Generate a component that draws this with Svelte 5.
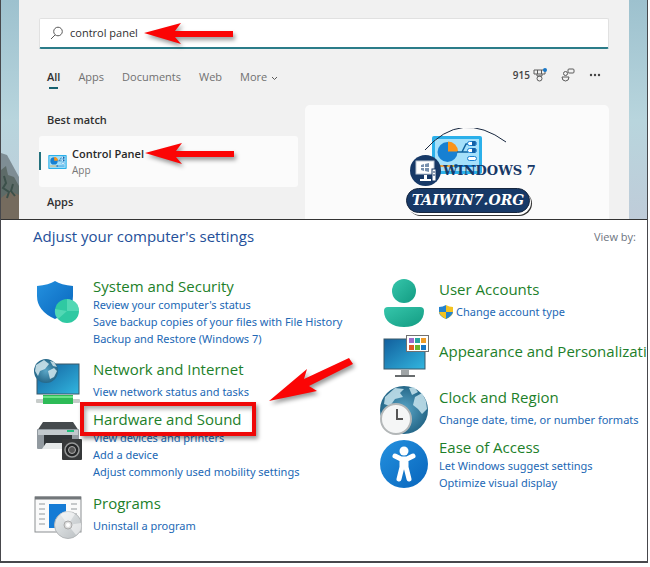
<script>
  const tabs = ['All', 'Apps', 'Documents', 'Web', 'More'];

  const columns = [
    [
      { id: 'system', title: 'System and Security', links: ["Review your computer's status", 'Save backup copies of your files with File History', 'Backup and Restore (Windows 7)'] },
      { id: 'network', title: 'Network and Internet', spaced: true, links: ['View network status and tasks'] },
      { id: 'hardware', title: 'Hardware and Sound', marked: true, links: ['View devices and printers', 'Add a device', 'Adjust commonly used mobility settings'] },
      { id: 'programs', title: 'Programs', spaced: true, links: ['Uninstall a program'] }
    ],
    [
      { id: 'users', title: 'User Accounts', spaced: true, shield: true, links: ['Change account type'] },
      { id: 'appearance', title: 'Appearance and Personalization', links: [] },
      { id: 'clock', title: 'Clock and Region', spaced: true, links: ['Change date, time, or number formats'] },
      { id: 'ease', title: 'Ease of Access', links: ['Let Windows suggest settings', 'Optimize visual display'] }
    ]
  ];

  let query = $state('control panel');
  let active = $state('All');
</script>

{#snippet panelArt()}
  <rect x="0" y="0" width="50" height="38" rx="2" fill="#2bb0ea" />
  <rect x="3" y="3" width="44" height="32" fill="#a5e0fa" />
  <circle cx="15.5" cy="16" r="10" fill="#1780d2" />
  <path d="M16 15.500V5.500a10 10 0 0 1 10 10z" fill="#fb9419" />
  <path d="M25 16h5l4-8h3M30 16h6" fill="none" stroke="#11639e" stroke-width="1.500" />
  <g fill="#fff" stroke="#1780d2"><rect x="35.500" y="5.500" width="9" height="4" rx="2" /><rect x="35.500" y="12.500" width="9" height="4" rx="2" /><rect x="35.500" y="20.500" width="9" height="4" rx="2" /></g>
  <path d="M40 5h3q2 2 0 5h-3zM40 12h3q2 2 0 5h-3z" fill="#1261a8" />
  <path d="M5 30h18" stroke="#e8a339" stroke-width="2" />
  <path d="M23 30h21" stroke="#1686d5" stroke-width="2" />
  <circle cx="24" cy="30" r="2" fill="#1261a8" />
{/snippet}

{#snippet arrow(cls)}
  <svg class="arrow {cls}" width="92" height="24" viewBox="0 0 92 24" aria-hidden="true">
    <path d="M1 11L38 1l-6 8h58v6H32l6 7z" fill="#fb0505" />
  </svg>
{/snippet}

{#snippet icon(id)}
  <svg class="icon" width="50" height="40" viewBox="0 0 50 40" aria-hidden="true">
    {#if id === 'system'}
      <path d="M2 10Q14 9 20 5q6 4 18 5v10q0 15-18 23Q2 35 2 20z" fill="url(#blue)" />
      <circle cx="32" cy="35" r="12" fill="#2fc9a2" />
      <path d="M32 35V23a12 12 0 0 1 12 12zM32 35l-9 8q-4-4-3-10z" fill="#65e0bf" opacity=".65" />
    {:else if id === 'network'}
      <rect x="2" y="5" width="42" height="30" fill="url(#screen)" stroke="#3b5869" />
      <circle cx="11" cy="12" r="12" fill="url(#globe)" />
      <path d="M1 6l8-5 5 4-4 5-5 2-2 5-3-5zM13 12l6-3 3 3-3 6-4 2zM15 2l4 1 3 5-4-1z" fill="#d4e7ed" opacity=".85" />
      <rect x="1" y="40" width="44" height="4" rx="1" fill="#c7ccca" />
      <path d="M8 36h30v9H8z" fill="#2dbb57" />
      <path d="M8 38h30" stroke="#6be287" stroke-width="2" />
    {:else if id === 'hardware'}
      <path d="M8 13h30l6 9H2z" fill="#454a4d" />
      <rect x="2" y="20" width="42" height="20" rx="1" fill="#929aa0" />
      <path d="M3 21h40v5H3z" fill="#c2c9cd" />
      <path d="M32 22h7" stroke="#20bf7d" stroke-width="2" />
      <path d="M9 26h28v14H9z" fill="#303538" />
      <path d="M11 34h24l4 6H7z" fill="#e5e8e9" />
      <rect x="27" y="30" width="20" height="21" rx="1" fill="#363839" />
      <circle cx="37" cy="41" r="7" fill="#242627" stroke="#969898" stroke-width="1.500" />
      <circle cx="37" cy="41" r="3.500" fill="#555" stroke="#aaa" />
    {:else if id === 'programs'}
      <rect x="0" y="4" width="46" height="35" fill="#fafafa" stroke="#8b8f92" />
      <path d="M0 5h46" stroke="#72777a" stroke-width="3" />
      <path d="M4 11h6M4 16h6M4 21h6M4 26h6M4 31h6M36 11h6M36 16h6M36 21h6" stroke="#92989b" />
      <rect x="14" y="11" width="17" height="24" fill="#157bd5" />
      <circle cx="33" cy="32" r="13.500" fill="url(#disc)" stroke="#b4b7b9" />
      <path d="M33 32L25 21q8-6 15 0zM33 32l8 10q7-5 5-12z" fill="#fff" opacity=".5" />
      <circle cx="33" cy="32" r="4" fill="#ddd" stroke="#aaa" /><circle cx="33" cy="32" r="2" fill="#fff" />
    {:else if id === 'users'}
      <circle cx="23" cy="12" r="12" fill="url(#teal)" />
      <path d="M7 28h32q4 0 4 4c0 10-8 16-20 16S3 42 3 32q0-4 4-4z" fill="url(#teal)" />
    {:else if id === 'appearance'}
      <rect x="3" y="-2" width="41" height="30" fill="url(#screen)" stroke="#3b5869" />
      <path d="M20 29h8v5h-8z" fill="#a0a5a7" /><path d="M14 35h20" stroke="#686c6e" stroke-width="2" />
      <rect x="25.500" y="-5.500" width="22" height="16" fill="#fff" stroke="#717171" />
      <path d="M28-3h5v5h-5z" fill="#9b6acc" /><path d="M34-3h5v5h-5z" fill="#27a5a0" /><path d="M40-3h5v5h-5z" fill="#ee9b27" />
      <path d="M28 4h5v5h-5z" fill="#dd5825" /><path d="M34 4h5v5h-5z" fill="#6ab52c" /><path d="M40 4h5v5h-5z" fill="#1976c4" />
    {:else if id === 'clock'}
      <circle cx="23" cy="23" r="24" fill="url(#globe)" />
      <path d="M4 10l10-9 9 1-4 4 3 4-8 2-5 7-6-2zM28 1l5-1 4 5-6 3zM34 10l7-4 4 8 1 8-5 5-4-5-5-4z" fill="#c9e5ee" opacity=".85" />
      <circle cx="15" cy="32" r="15" fill="#f5f6f6" stroke="#b3b7b8" stroke-width="2" />
      <path d="M16 22v10h6" fill="none" stroke="#555" stroke-width="2" />
    {:else}
      <circle cx="23" cy="27" r="24" fill="url(#blue)" />
      <circle cx="23" cy="14" r="4.500" fill="#fff" />
      <path d="M14 19l6 3h6l6-3M21 24h4v6h-4zM21 30l-3 12M25 30l3 12" fill="none" stroke="#fff" stroke-width="5" stroke-linecap="round" stroke-linejoin="round" />
    {/if}
  </svg>
{/snippet}

<svg class="defs" width="0" height="0" aria-hidden="true">
  <defs>
    <linearGradient id="blue" x2="1" y2="1"><stop stop-color="#2491df" /><stop offset="1" stop-color="#0865bc" /></linearGradient>
    <linearGradient id="screen" x2="1" y2="1"><stop stop-color="#125f9d" /><stop offset="1" stop-color="#32b6df" /></linearGradient>
    <linearGradient id="teal" x2="1" y2="1"><stop stop-color="#36c6ab" /><stop offset="1" stop-color="#129b82" /></linearGradient>
    <linearGradient id="disc" x2="1" y2="1"><stop stop-color="#edf0f1" /><stop offset="1" stop-color="#b8bdc0" /></linearGradient>
    <radialGradient id="globe"><stop stop-color="#5aa6c7" /><stop offset="1" stop-color="#266889" /></radialGradient>
  </defs>
</svg>

<main>
  <section class="desktop">
    <svg class="hills" width="18" height="70" viewBox="0 0 18 70" aria-hidden="true">
      <path d="M0 4l6 2 12 22v42H0z" fill="#7e8d94" />
      <path d="M0 21l5-4 2 9 6 2 5 9v33H0z" fill="#5d6b68" />
      <path d="M0 49l9-7 9 4v24H0z" fill="#756b5e" />
      <path d="M3 27l2 7-3 5 6 4-2 6M12 35l-2 7 4 5" fill="none" stroke="#3c504a" stroke-width="2" />
    </svg>
    <div class="start">
      <label class="search">
        <svg width="14" height="14" viewBox="0 0 14 14" aria-hidden="true"><circle cx="8" cy="5.500" r="4.300" /><path d="M5 9l-4 4" /></svg>
        <input type="text" bind:value={query} aria-label="Search" />
      </label>
      {@render arrow('first')}

      <div class="bar">
        <nav>
          {#each tabs as tab}
            <button class:on={active === tab} onclick={() => (active = tab)}>
              {tab}{#if tab === 'More'}<svg width="7" height="5" viewBox="0 0 7 5" aria-hidden="true"><path d="M1 1l2.500 2.500L6 1" /></svg>{/if}
            </button>
          {/each}
        </nav>
        <div class="tools">
          <button class="points">915
            <svg width="14" height="14" viewBox="0 0 14 14" aria-hidden="true"><path d="M1 2h11v4H9v2H4V6H1zM4.500 2v4h4V2" /><circle cx="6.500" cy="10.500" r="2.500" /><circle class="dot" cx="12" cy="2" r="2" /></svg>
          </button>
          <button aria-label="Chat"><svg width="14" height="14" viewBox="0 0 14 14" aria-hidden="true"><rect x="7" y="1" width="6" height="4" rx="1" /><circle cx="4.500" cy="5.500" r="2" /><path d="M1 9h7q0 4-3.500 4T1 9z" /></svg></button>
          <button aria-label="Options"><svg width="12" height="14" viewBox="0 0 12 14" aria-hidden="true"><g class="dots"><circle cx="2" cy="7" r="1.200" /><circle cx="6" cy="7" r="1.200" /><circle cx="10" cy="7" r="1.200" /></g></svg></button>
        </div>
      </div>

      <div class="results">
        <div class="list">
          <h2>Best match</h2>
          <button class="match">
            <svg width="19" height="14" viewBox="0 0 50 38" aria-hidden="true">{@render panelArt()}</svg>
            <span><b>Control Panel</b><small>App</small></span>
          </button>
          <h2>Apps</h2>
          {@render arrow('second')}
        </div>
        <div class="preview">
          <svg class="big" width="50" height="38" viewBox="0 0 50 38" aria-hidden="true">{@render panelArt()}</svg>
          <div class="brand">
            <svg class="arc" width="84" height="24" viewBox="0 0 84 24" aria-hidden="true"><path d="M1 22Q37-19 82 14" fill="none" stroke="#16263e" /></svg>
            <div class="name">
              <svg width="31" height="31" viewBox="0 0 31 31" aria-hidden="true">
                <circle cx="15.500" cy="15.500" r="15.500" fill="#173967" />
                <rect x="6" y="6" width="18" height="13" fill="#fff" stroke="#bdc7d4" />
                <path d="M14 20h3v4h4v2H10v-2h4z" fill="#fff" />
                <path d="M11 10l3-1v3h-3zM15 9l4-1v4h-4zM11 13h3v3l-3-1zM15 13h4v4l-4-1z" fill="#7890ad" />
                <rect x="22" y="14" width="4" height="12" fill="#fff" stroke="#173967" /><path d="M23 17h2M23 20h2" stroke="#173967" />
              </svg>
              <span>WINDOWS 7</span>
            </div>
            <div class="pill">TAIWIN7.ORG</div>
          </div>
        </div>
      </div>
    </div>
  </section>

  <section class="settings">
    <header>
      <h1>Adjust your computer's settings</h1>
      <span>View by:</span>
    </header>
    <div class="columns">
      {#each columns as column}
        <div class="column">
          {#each column as item}
            <article class={item.id}>
              {@render icon(item.id)}
              <div class="text">
                <h3 class:spaced={item.spaced} class:marked={item.marked}><a href="#{item.id}">{item.title}</a></h3>
                {#each item.links as link}
                  <a class="link" href="#{item.id}">
                    {#if item.shield}
                      <svg width="14" height="14" viewBox="0 0 14 14" aria-hidden="true"><path d="M7 0Q4 2 0 2v5q0 4 7 7z" fill="#2683ce" /><path d="M7 0q3 2 7 2v5q0 4-7 7z" fill="#f4c321" /><path d="M0 7h7v7Q1 11 0 7z" fill="#f4c321" /><path d="M7 7h7q-1 4-7 7z" fill="#2683ce" /></svg>
                    {/if}{link}</a>
                {/each}
              </div>
            </article>
          {/each}
        </div>
      {/each}
    </div>
    <svg class="arrow third" width="88" height="46" viewBox="0 0 88 46" aria-hidden="true"><path d="M1 44L39 12l-3 10L81 1l4 6-44 22 8 5z" fill="#fb0505" /></svg>
  </section>
</main>

<style>
  :global(body) { margin: 0; background: #fff; }
  main {
    margin-right: 2px;
    border: solid #47484c;
    border-width: 0 1px 2px 1px;
    font-family: "Open Sans", "Noto Sans", sans-serif;
    overflow: hidden;
  }
  h1, h2, h3 { margin: 0; font-weight: 400; }
  button { padding: 0; border: 0; background: none; font: inherit; color: inherit; text-align: left; }
  a { color: inherit; text-decoration: none; }
  svg { flex: none; }
  .defs { position: absolute; }

  .desktop {
    position: relative;
    box-sizing: border-box;
    height: 220px;
    padding: 0 18px;
    border-bottom: 1px solid #333;
    background: linear-gradient(#9dc1ce, #b8d5dd 55%, #bfccd9);
    overflow: hidden;
  }
  .hills { position: absolute; left: 0; bottom: 0; }
  .start {
    position: relative;
    display: flex;
    flex-direction: column;
    height: 100%;
    box-sizing: border-box;
    padding: 18px 20px 0;
    background: #f1f1f1;
  }
  .search {
    display: flex;
    align-items: center;
    gap: 6px;
    height: 28px;
    padding-left: 10px;
    border: 1px solid #e1e1e1;
    border-bottom: 2px solid #2b7c89;
    border-radius: 2px;
    background: #fff;
  }
  .search svg, .bar svg { fill: none; stroke: #5a5a5a; }
  input { flex: 1; min-width: 0; padding: 0; border: 0; outline: 0; background: none; font: 11px/16px "Open Sans", "Noto Sans", sans-serif; color: #303030; }
  .bar { display: flex; justify-content: space-between; padding: 16px 8px 0; font-size: 11px; line-height: 20px; color: #707070; }
  nav { display: flex; gap: 18px; }
  nav button { position: relative; height: 24px; }
  nav button svg { margin-left: 4px; }
  nav .on { color: #303030; font-weight: 600; }
  nav .on::after { content: ""; position: absolute; left: 2px; bottom: 0; width: 9px; height: 2px; background: #17616f; }
  .tools { display: flex; gap: 14px; height: 20px; color: #444; }
  .tools button { display: flex; align-items: center; gap: 3px; }
  .points { font-size: 10px; font-weight: 600; }
  .bar .dot { fill: #1878c8; stroke: none; }
  .bar .dots { fill: #444; stroke: none; }

  .results { display: flex; flex: 1; gap: 7px; padding-top: 16px; }
  .list { position: relative; flex: 259; }
  .list h2 { padding: 6px 8px 7px; font-size: 11px; font-weight: 600; line-height: 18px; color: #303030; }
  .match {
    position: relative;
    display: flex;
    align-items: center;
    gap: 5px;
    width: 100%;
    height: 51px;
    padding-left: 9px;
    border-radius: 3px;
    background: #fbfbfb;
  }
  .match::before { content: ""; position: absolute; left: 0; top: 16px; width: 2px; height: 18px; background: #23717d; }
  .match b, .match small { display: block; font-size: 11px; line-height: 16px; }
  .match b { font-weight: 600; color: #282828; }
  .match small { font-size: 10px; color: #777; }
  .preview { position: relative; flex: 304; border-radius: 5px 5px 0 0; background: #fbfbfb; }
  .big { position: absolute; left: 127px; top: 31px; }
  .brand { position: absolute; left: 101px; top: 50px; color: #173967; font-family: "DejaVu Serif", serif; font-weight: 700; }
  .arc { position: absolute; left: 18px; top: -27px; }
  .name { display: flex; align-items: center; gap: 2px; padding-left: 4px; font-size: 13px; white-space: nowrap; }
  .pill {
    width: 122px;
    height: 23px;
    margin-top: 2px;
    border: 1px solid #16263e;
    border-radius: 13px;
    background: #173967;
    box-shadow: 1px 2px 0 #fff, 2px 3px 0 #333;
    color: #fff;
    font-size: 14px;
    font-style: italic;
    line-height: 23px;
    text-align: center;
  }

  .settings { position: relative; height: 341px; background: #fff; }
  header { display: flex; justify-content: space-between; align-items: center; height: 32px; padding: 0 11px 0 32px; }
  h1 { font-size: 15px; line-height: 20px; color: #244f99; }
  header span { font-size: 11px; color: #6d7480; }
  .columns { display: flex; padding: 24px 0 0 34px; }
  .column { flex: 0 0 346px; }
  .column + .column { flex: 1; min-width: 0; padding-top: 3px; }
  article { display: flex; gap: 8px; }
  .icon { overflow: visible; }
  .text { min-width: 0; white-space: nowrap; }
  h3 { font-size: 15px; line-height: 20px; color: #1d7f2a; }
  .spaced { margin-bottom: 4px; }
  .link { display: flex; align-items: center; gap: 3px; font-family: "Noto Sans", sans-serif; font-size: 11px; line-height: 17px; color: #2268b5; }
  .system { height: 83px; }
  .network { height: 50px; }
  .hardware { height: 84px; }
  .users { height: 62px; }
  .appearance { height: 46px; }
  .clock { height: 50px; }
  .marked { position: relative; }
  .marked::after {
    content: "";
    position: absolute;
    left: -13px;
    top: -7px;
    width: 168px;
    height: 26px;
    border: 4px solid #ef0808;
    box-shadow: 2px 3px 4px #0006, inset 2px 3px 4px #0005;
  }
  .arrow { position: absolute; overflow: visible; filter: drop-shadow(2px 3px 2px #0006); pointer-events: none; }
  .first { left: 124px; top: 22px; }
  .second { left: 105px; top: 37px; }
  .third { left: 267px; top: 137px; }
</style>
